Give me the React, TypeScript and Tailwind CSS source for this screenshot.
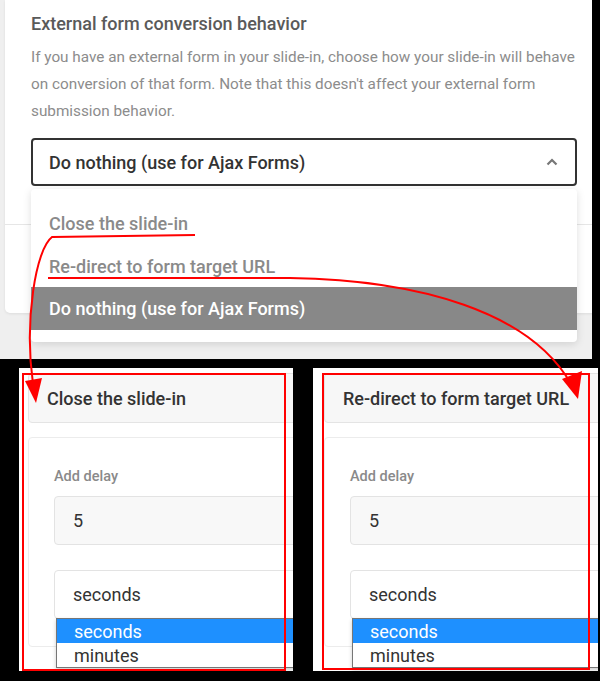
const options = ["Close the slide-in", "Re-direct to form target URL", "Do nothing (use for Ajax Forms)"];

const TopSection = () => (
  <div className="relative w-[592px] h-[359px] bg-[#efefef] overflow-hidden">
    <div className="ml-[5px] w-[600px] h-[313px] bg-white rounded-bl-[5px] shadow-[0_1px_3px_rgba(0,0,0,0.08)] flex flex-col">
      <div className="h-[225px] border-b border-[#e6e6e6] pl-[26px] pt-[12px]">
        <div className="text-[18px] leading-[24px] font-medium text-[#5a5a5a]">External form conversion behavior</div>
        <p className="mt-[8px] w-[550px] text-[15.3px] leading-[27px] text-[#8c8c8c]">
          If you have an external form in your slide-in, choose how your slide-in will behave on conversion of that form. Note that this doesn't affect your external form submission behavior.
        </p>
        <div className="mt-[13px] w-[546px] h-[48px] border-2 border-[#333] rounded-[4px] flex items-center justify-between pl-[16px] pr-[16px]">
          <span className="text-[18px] font-medium text-[#333]">Do nothing (use for Ajax Forms)</span>
          <svg width="12" height="8" viewBox="0 0 12 8" className="mr-[1px]">
            <polyline points="1.5,6.5 6,2 10.5,6.5" fill="none" stroke="#777" strokeWidth="2.2" />
          </svg>
        </div>
      </div>
    </div>

    <div className="absolute left-[31px] top-[189px] w-[546px] bg-white rounded-[4px] py-[12px] shadow-[0_2px_8px_rgba(0,0,0,0.13)]">
      {options.map((o, i) =>
        i === 2 ? (
          <div key={o} className="h-[43px] flex items-center pl-[18px] bg-[#888] text-white text-[18px] font-medium">{o}</div>
        ) : (
          <div key={o} className="h-[43px] flex items-center pl-[18px] pt-[2px] text-[#8a8a8a] text-[18px] font-medium">{o}</div>
        )
      )}
    </div>
  </div>
);

const Panel = ({ title, className }: { title: string; className: string }) => (
  <div className={`bg-white overflow-hidden h-[303px] pt-[5px] ${className}`}>
    <div className="w-[320px] h-[50px] bg-[#f7f7f7] border border-[#e4e4e4] rounded-[4px] flex items-center pl-[18px]">
      <span className="text-[18px] font-medium text-[#333]">{title}</span>
    </div>
    <div className="mt-[14px] w-[320px] border border-[#ececec] rounded-[4px] pt-[30px] pb-[27px] pl-[25px]">
      <div className="text-[14.5px] leading-[18px] font-medium text-[#8a8a8a]">Add delay</div>
      <div className="mt-[10px] w-[300px] h-[49px] bg-[#f8f8f8] border border-[#e3e3e3] rounded-[4px] flex items-center pl-[18px] text-[18px] text-[#333]">5</div>
      <div className="relative mt-[25px] w-[300px] h-[49px] bg-white border border-[#e3e3e3] rounded-[4px] flex items-center pl-[18px] text-[18px] text-[#333]">
        seconds
        <div className="absolute left-[1px] top-full w-[300px] bg-white border border-[#767676] shadow-[0_2px_4px_rgba(0,0,0,0.2)]">
          <div className="h-[24px] bg-[#1e90ff] text-white flex items-center pl-[17px] pt-[1px] text-[18px]">seconds</div>
          <div className="h-[24px] text-[#333] flex items-center pl-[17px] pt-[1px] text-[18px]">minutes</div>
        </div>
      </div>
    </div>
  </div>
);

const Annotations = () => (
  <svg className="absolute inset-0 pointer-events-none" width="600" height="681" viewBox="0 0 600 681">
    <g fill="none" stroke="#ff0000" strokeWidth="2">
      <path d="M195,235 L52,237 C36,249 24,320 33,384" />
      <path d="M48,278 L290,278 C420,280 530,312 571,384" />
      <rect x="23" y="374" width="262" height="296" />
      <rect x="323" y="374" width="266" height="295" />
    </g>
    <polygon points="25,381 42,378 36,403" fill="#ff0000" />
    <polygon points="562,379 582,371 578,399" fill="#ff0000" />
  </svg>
);

export default function App() {
  return (
    <div className="relative w-[600px] h-[681px] bg-black overflow-hidden font-['Roboto',sans-serif]">
      <TopSection />
      <div className="flex mt-[9px]">
        <Panel title="Close the slide-in" className="ml-[19px] w-[274px] pl-[9px]" />
        <Panel title="Re-direct to form target URL" className="ml-[20px] w-[285px] pl-[11px]" />
      </div>
      <Annotations />
    </div>
  );
}
